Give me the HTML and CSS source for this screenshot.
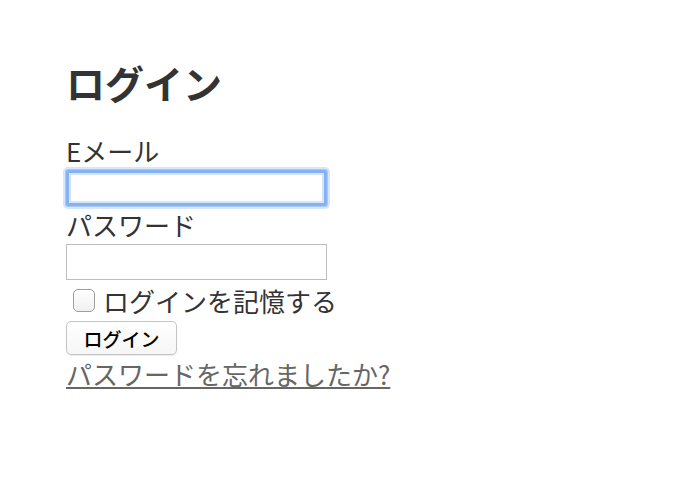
FILE: index.html
```html
<!DOCTYPE html>
<html lang="ja">
<head>
<meta charset="utf-8">
<title>ログイン</title>
<link rel="stylesheet" href="styles.css">
</head>
<body>
<main class="page">
  <h1 class="title">ログイン</h1>
  <form class="form">
    <label class="label" for="email">Eメール</label>
    <input class="field field-focus" id="email" type="text">
    <label class="label" for="password">パスワード</label>
    <input class="field" id="password" type="password">
    <label class="remember"><span class="check"></span>ログインを記憶する</label>
    <button class="btn" type="button">ログイン</button>
    <a class="link" href="#">パスワードを忘れましたか?</a>
  </form>
</main>
</body>
</html>
```
FILE: styles.css
```css
html, body {
  margin: 0;
  padding: 0;
  background: #fff;
}
body {
  font-family: "Noto Sans CJK JP", "Noto Sans", sans-serif;
  color: #333;
}
.page {
  padding: 56px 0 0 66px;
}
.title {
  margin: 0 0 24px 0;
  font-size: 39px;
  line-height: 52px;
  font-weight: 700;
  color: #333;
}
.form {
  display: flex;
  flex-direction: column;
  align-items: flex-start;
}
.label {
  font-size: 26px;
  line-height: 38px;
  height: 38px;
  color: #333;
}
.field {
  box-sizing: border-box;
  width: 261px;
  height: 36px;
  margin: 0;
  border: 1px solid #bdbdbd;
  background: #fff;
  outline: none;
  padding: 0 6px;
  font-size: 18px;
}
.field-focus {
  border: 3px solid #86b1f2;
  border-radius: 2px;
  box-shadow: inset 0 0 0 2px #d3e4fb, 0 0 0 1px #a9c9f6, 0 0 0 3px #d6e6fc;
}
.remember {
  display: flex;
  align-items: center;
  height: 41px;
  font-size: 26px;
  line-height: 41px;
  color: #333;
}
.check {
  box-sizing: border-box;
  width: 22px;
  height: 23px;
  margin: 0 8px 0 7px;
  border: 1px solid #9e9e9e;
  border-radius: 5px;
  background: linear-gradient(#fff, #f0f0f0);
}
.btn {
  box-sizing: border-box;
  width: 111px;
  height: 34px;
  margin: 0;
  padding: 0;
  border: 1px solid #c4c4c4;
  border-radius: 5px;
  background: linear-gradient(#fff, #f6f6f6);
  box-shadow: 0 1px 1px rgba(0,0,0,0.08);
  font-family: "Noto Sans CJK JP", sans-serif;
  font-size: 19px;
  font-weight: 500;
  color: #000;
}
.link {
  font-size: 26px;
  line-height: 38px;
  color: #666;
  text-decoration: underline;
  text-underline-offset: 2px;
}
```
